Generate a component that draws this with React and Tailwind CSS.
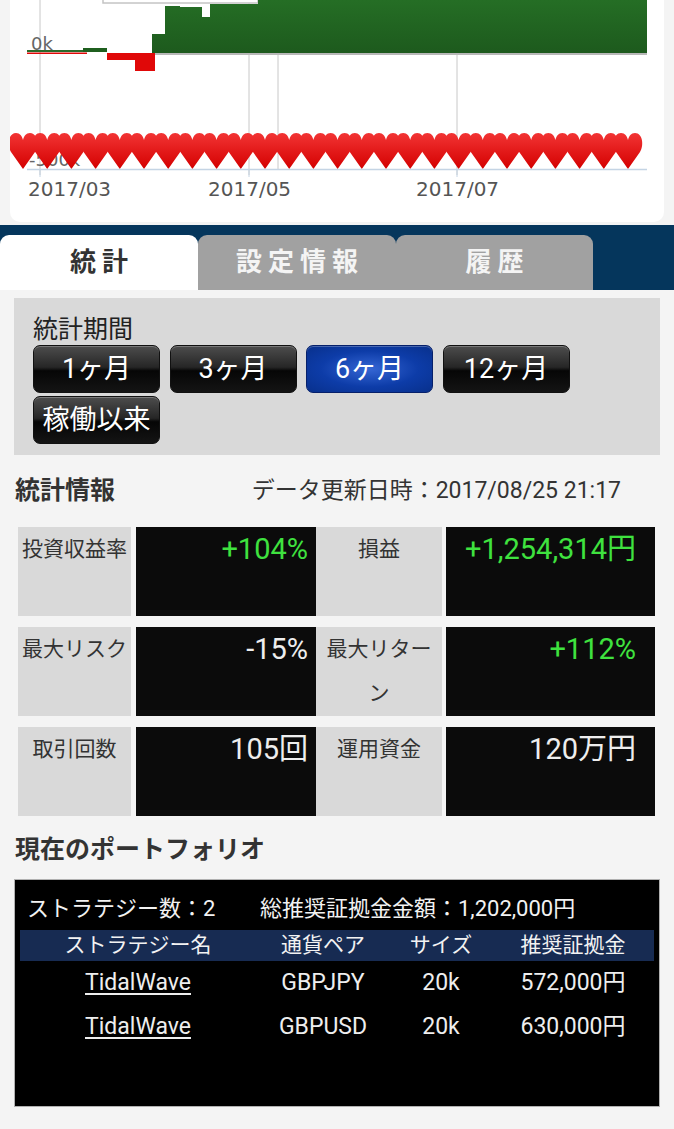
import React from "react";

function Chart() {
  const hearts = [];
  for (let i = 0; i < 26; i++) {
    const x = 8 + i * 24.2;
    hearts.push(
      <path
        key={i}
        transform={`translate(${x} 129)`}
        d="M15 40 L3 23 C-1 17 0 4 8 4 C12 4 14 7 15 11 C16 7 18 4 22 4 C30 4 31 17 27 23 Z"
        fill="url(#hg)"
      />
    );
  }
  return (
    <svg width="654" height="222" viewBox="10 0 654 222" className="block">
      <defs>
        <linearGradient id="gg" x1="0" y1="0" x2="0" y2="1">
          <stop offset="0" stopColor="#256e25" />
          <stop offset="1" stopColor="#1d5a1d" />
        </linearGradient>
        <linearGradient id="hg" x1="0" y1="0" x2="0" y2="1">
          <stop offset="0" stopColor="#f23434" />
          <stop offset="1" stopColor="#d40000" />
        </linearGradient>
      </defs>
      <line x1="40" y1="0" x2="40" y2="175" stroke="#c8c8c8" strokeWidth="1" />
      <line x1="249" y1="0" x2="249" y2="175" stroke="#c8c8c8" strokeWidth="1" />
      <line x1="278" y1="0" x2="278" y2="169" stroke="#c8c8c8" strokeWidth="1" />
      <line x1="457" y1="0" x2="457" y2="175" stroke="#c8c8c8" strokeWidth="1" />
      <text x="31" y="50" fontFamily="DejaVu Sans" fontSize="18" fill="#666">0k</text>
      <rect x="103" y="-10" width="155" height="13" fill="#fff" stroke="#c4c4c4" strokeWidth="1.5" />
      <polygon
        points="152,53 152,34 165,34 165,6 180,6 180,7 202,7 202,17 210,17 210,4 258,4 258,0 647,0 647,53"
        fill="url(#gg)"
      />
      <rect x="152" y="53" width="495" height="2" fill="#b8b8b8" />
      <rect x="27" y="50" width="56" height="2" fill="#2a6a2a" />
      <rect x="83" y="48" width="24" height="4" fill="#1f5f1f" />
      <rect x="27" y="52.5" width="60" height="1.5" fill="#e00808" />
      <rect x="107" y="53" width="48" height="7" fill="#e00808" />
      <rect x="135" y="53" width="20" height="18" fill="#e00808" />
      <text x="29" y="166" fontFamily="DejaVu Sans" fontSize="18" fill="#666">-500k</text>
      {hearts}
      <line x1="27" y1="169.5" x2="647" y2="169.5" stroke="#c4d4e4" strokeWidth="1.5" />
      <line x1="40" y1="169" x2="40" y2="177" stroke="#c4d4e4" strokeWidth="1" />
      <line x1="249" y1="169" x2="249" y2="177" stroke="#c4d4e4" strokeWidth="1" />
      <line x1="457" y1="169" x2="457" y2="177" stroke="#c4d4e4" strokeWidth="1" />
      <text x="28" y="196" fontFamily="DejaVu Sans" fontSize="20" fill="#555">2017/03</text>
      <text x="208" y="196" fontFamily="DejaVu Sans" fontSize="20" fill="#555">2017/05</text>
      <text x="416" y="196" fontFamily="DejaVu Sans" fontSize="20" fill="#555">2017/07</text>
    </svg>
  );
}

function Btn({ children, active }) {
  return (
    <div
      className={
        active
          ? "flex h-[48px] w-[127px] items-center justify-center rounded-[7px] border border-[#06206a] bg-[radial-gradient(ellipse_at_center,#3566d4_0%,#0d3ca8_55%,#08308c_100%)] text-[27px] text-white shadow-[inset_0_1px_0_rgba(255,255,255,0.25)]"
          : "flex h-[48px] w-[127px] items-center justify-center rounded-[7px] border border-[#111] bg-[linear-gradient(to_bottom,#4d4d4d,#262626_46%,#060606_54%,#141414)] text-[27px] text-white shadow-[inset_0_1px_0_rgba(255,255,255,0.25)]"
      }
    >
      {children}
    </div>
  );
}

function StatRow({ l1, v1, c1, l2, v2, c2 }) {
  return (
    <div className="flex h-[89px]">
      <div className="w-[113px] bg-[#d9d9d9] px-[2px] text-center text-[21px] leading-[44px] text-[#333]">{l1}</div>
      <div className={"ml-[5px] w-[180px] bg-[#0b0b0b] pr-[8px] text-right text-[29px] leading-[44px] " + c1}>{v1}</div>
      <div className="w-[126px] bg-[#d9d9d9] px-[2px] text-center text-[21px] leading-[44px] text-[#333]">{l2}</div>
      <div className={"ml-[4px] w-[209px] bg-[#0b0b0b] pr-[19px] text-right text-[29px] leading-[44px] " + c2}>{v2}</div>
    </div>
  );
}

export default function App() {
  return (
    <div className="min-h-[1129px] w-[674px] overflow-hidden bg-[#f4f4f4] font-['Roboto','Noto_Sans_CJK_JP',sans-serif]">
      <div className="mx-[10px] h-[222px] overflow-hidden rounded-b-[10px] bg-white">
        <Chart />
      </div>

      <div className="mt-[3px] flex h-[65px] bg-[#05365c] pt-[10px]">
        <div className="flex h-[55px] w-[198px] items-center justify-center rounded-t-[9px] bg-white pl-[6px] text-[26px] font-bold tracking-[6px] text-[#333]">
          統計
        </div>
        <div className="flex h-[55px] w-[198px] items-center justify-center rounded-t-[9px] bg-[#a1a1a1] pl-[6px] text-[26px] font-bold tracking-[6px] text-[#f4f4f4]">
          設定情報
        </div>
        <div className="flex h-[55px] w-[197px] items-center justify-center rounded-t-[9px] bg-[#a1a1a1] pl-[6px] text-[26px] font-bold tracking-[6px] text-[#f4f4f4]">
          履歴
        </div>
      </div>

      <div className="mx-[14px] mt-[8px] h-[157px] bg-[#d9d9d9] pl-[19px] pt-[17px]">
        <div className="h-[30px] text-[25px] leading-[30px] text-[#222]">統計期間</div>
        <div className="flex flex-wrap gap-x-[9.5px] gap-y-[3px]">
          <Btn>1ヶ月</Btn>
          <Btn>3ヶ月</Btn>
          <Btn active>6ヶ月</Btn>
          <Btn>12ヶ月</Btn>
          <Btn>稼働以来</Btn>
        </div>
      </div>

      <div className="flex h-[72px] items-center pl-[15px] pr-[53px]">
        <div className="text-[25px] font-bold text-[#333]">統計情報</div>
        <div className="ml-auto text-[23px] text-[#333]">データ更新日時：2017/08/25 21:17</div>
      </div>

      <div className="ml-[18px] flex flex-col gap-[11px]">
        <StatRow l1="投資収益率" v1="+104%" c1="text-[#3fe23f]" l2="損益" v2="+1,254,314円" c2="text-[#3fe23f]" />
        <StatRow l1="最大リスク" v1="-15%" c1="text-[#eeeeee]" l2="最大リターン" v2="+112%" c2="text-[#3fe23f]" />
        <StatRow l1="取引回数" v1="105回" c1="text-[#eeeeee]" l2="運用資金" v2="120万円" c2="text-[#eeeeee]" />
      </div>

      <div className="flex h-[63px] items-center pl-[15px] pt-[4px]">
        <div className="text-[25px] font-bold text-[#333]">現在のポートフォリオ</div>
      </div>

      <div className="mx-[14px] h-[228px] border border-[#b0b0b0] bg-black px-[5px] pt-[13px]">
        <div className="flex h-[30px] items-center pl-[7px] text-[22px] text-[#f2f2f2]">
          <div className="w-[233px]">ストラテジー数：2</div>
          <div>総推奨証拠金金額：1,202,000円</div>
        </div>
        <div className="mt-[7px] grid h-[31px] grid-cols-[236px_134px_102px_162px] items-center bg-[#172b52] text-center text-[21px] text-[#f2f2f2]">
          <div>ストラテジー名</div>
          <div>通貨ペア</div>
          <div>サイズ</div>
          <div>推奨証拠金</div>
        </div>
        <div className="grid h-[44px] grid-cols-[236px_134px_102px_162px] items-center text-center text-[23px] text-[#eeeeee]">
          <div className="underline underline-offset-[3px]">TidalWave</div>
          <div>GBPJPY</div>
          <div>20k</div>
          <div>572,000円</div>
        </div>
        <div className="grid h-[44px] grid-cols-[236px_134px_102px_162px] items-center text-center text-[23px] text-[#eeeeee]">
          <div className="underline underline-offset-[3px]">TidalWave</div>
          <div>GBPUSD</div>
          <div>20k</div>
          <div>630,000円</div>
        </div>
      </div>
    </div>
  );
}
